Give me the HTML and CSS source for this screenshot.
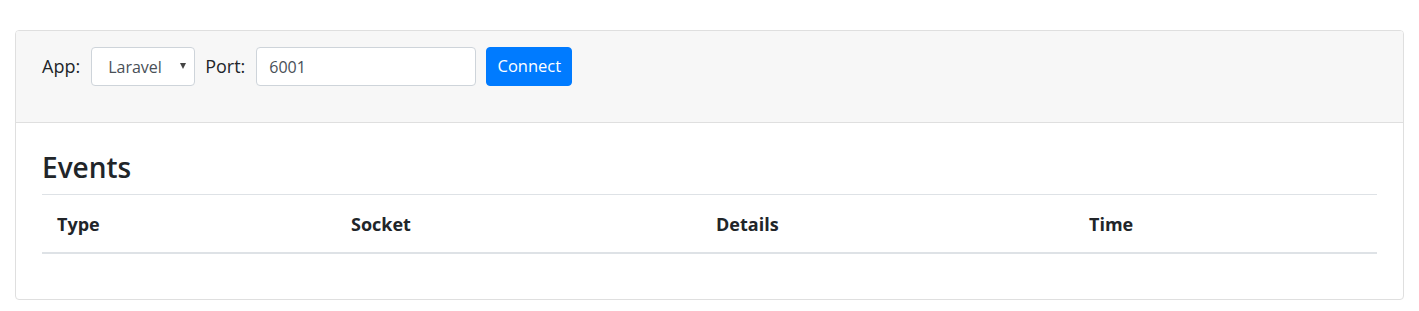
FILE: index.html
```html
<!DOCTYPE html>
<html lang="en">
<head>
    <meta charset="UTF-8">
    <title>WebSockets Dashboard</title>
    <link rel="stylesheet" href="styles.css">
</head>
<body>
    <div class="container">
        <div class="card">
            <div class="card-header">
                <form class="connect-form">
                    <label for="app">App:</label>
                    <div class="select-wrap">
                        <select id="app">
                            <option>Laravel</option>
                        </select>
                    </div>
                    <label for="port">Port:</label>
                    <input id="port" type="text" value="6001">
                    <button type="button" class="btn-primary">Connect</button>
                </form>
            </div>
            <div class="card-body">
                <h3>Events</h3>
                <table class="events">
                    <thead>
                        <tr>
                            <th class="col-type">Type</th>
                            <th class="col-socket">Socket</th>
                            <th class="col-details">Details</th>
                            <th>Time</th>
                        </tr>
                    </thead>
                    <tbody></tbody>
                </table>
            </div>
        </div>
    </div>
</body>
</html>
```

FILE: styles.css
```css
body {
    margin: 0;
    font-family: "Open Sans", "Noto Sans", sans-serif;
    font-size: 16px;
    line-height: 1.5;
    color: #212529;
    background: #fff;
}

.container {
    padding: 30px 15px 0;
}

.card {
    border: 1px solid #dfdfdf;
    border-radius: 4px;
    overflow: hidden;
}

.card-header {
    background: #f7f7f7;
    border-bottom: 1px solid #dfdfdf;
    padding: 16px 26px 36px;
}

.connect-form {
    display: flex;
    align-items: center;
}

.connect-form label {
    font-size: 18px;
    margin-right: 11px;
}

.select-wrap {
    position: relative;
    margin-right: 10px;
}

.select-wrap::after {
    content: "";
    position: absolute;
    right: 9px;
    top: 16px;
    border-left: 3.5px solid transparent;
    border-right: 3.5px solid transparent;
    border-top: 6px solid #444;
    pointer-events: none;
}

select,
input {
    box-sizing: border-box;
    height: 39px;
    border: 1px solid #ced4da;
    border-radius: 4px;
    background: #fff;
    font: inherit;
    font-size: 16px;
    color: #495057;
}

select {
    appearance: none;
    -webkit-appearance: none;
    width: 104px;
    padding: 0 30px 0 16px;
}

input {
    width: 220px;
    padding: 0 12px;
    margin-right: 10px;
}

.btn-primary {
    height: 39px;
    width: 86px;
    border: 1px solid #007bff;
    border-radius: 4px;
    background: #007bff;
    color: #fff;
    font: inherit;
    font-size: 16.5px;
    padding: 0;
}

.card-body {
    padding: 28px 26px 26px;
}

h3 {
    margin: 0 0 9px;
    font-size: 28px;
    font-weight: 600;
    line-height: 1.2;
}

.events {
    width: 100%;
    border-collapse: collapse;
    margin-bottom: 19px;
}

.events th {
    text-align: left;
    font-size: 18px;
    font-weight: 700;
    line-height: 24px;
    padding: 17px 15px 16px;
    border-top: 1px solid #dee2e6;
    border-bottom: 2px solid #dee2e6;
}

.col-type {
    width: 264px;
}

.col-socket {
    width: 335px;
}

.col-details {
    width: 343px;
}
```
